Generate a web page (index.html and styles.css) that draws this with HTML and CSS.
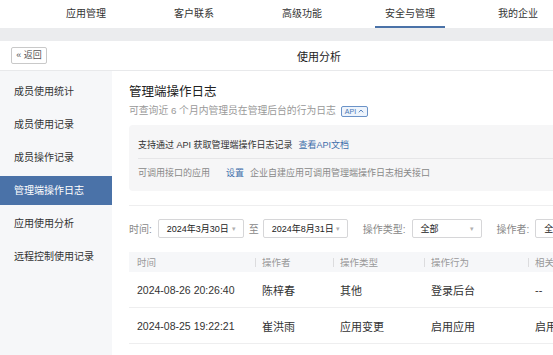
FILE: index.html
```html
<!DOCTYPE html>
<html lang="zh-CN">
<head>
<meta charset="utf-8">
<title>使用分析</title>
<link rel="stylesheet" href="styles.css">
</head>
<body>
<div class="page">
  <nav class="topnav">
    <a class="nav-item"><span>应用管理</span></a>
    <a class="nav-item"><span>客户联系</span></a>
    <a class="nav-item"><span>高级功能</span></a>
    <a class="nav-item active"><span>安全与管理</span></a>
    <a class="nav-item"><span>我的企业</span></a>
  </nav>
  <div class="band"></div>
  <header class="subhead">
    <div class="subhead-left"><button class="back">« 返回</button></div>
    <div class="subhead-title">使用分析</div>
    <div></div>
  </header>
  <div class="content">
    <aside class="sidebar">
      <div class="side-item">成员使用统计</div>
      <div class="side-item">成员使用记录</div>
      <div class="side-item">成员操作记录</div>
      <div class="side-item active">管理端操作日志</div>
      <div class="side-item">应用使用分析</div>
      <div class="side-item">远程控制使用记录</div>
    </aside>
    <main class="main">
      <h1 class="title">管理端操作日志</h1>
      <p class="subtitle">可查询近 6 个月内管理员在管理后台的行为日志<span class="badge">API<svg width="6" height="4" viewBox="0 0 6 4"><polyline points="0.8,3.3 3,1 5.2,3.3" fill="none" stroke="currentColor" stroke-width="0.9"/></svg></span></p>
      <div class="infobox">
        <div class="info-row first">支持通过 API 获取管理端操作日志记录<a class="link">查看API文档</a></div>
        <div class="info-row second"><span class="muted">可调用接口的应用</span><a class="link">设置</a><span class="muted">企业自建应用可调用管理端操作日志相关接口</span></div>
      </div>
      <div class="divider"></div>
      <div class="filters">
        <div class="group">
          <span class="label">时间:</span>
          <div class="select w86"><span class="val">2024年3月30日</span><span class="arrow">▾</span></div>
          <span class="label to">至</span>
          <div class="select w85"><span class="val">2024年8月31日</span><span class="arrow">▾</span></div>
        </div>
        <div class="group">
          <span class="label">操作类型:</span>
          <div class="select w70"><span class="val">全部</span><span class="arrow">▾</span></div>
        </div>
        <div class="group">
          <span class="label">操作者:</span>
          <div class="select w70"><span class="val">全部</span><span class="arrow">▾</span></div>
        </div>
      </div>
      <table class="log">
        <colgroup><col class="c1"><col class="c2"><col class="c3"><col class="c4"><col></colgroup>
        <thead>
          <tr><th class="nosep">时间</th><th>操作者</th><th>操作类型</th><th>操作行为</th><th>相关对象</th></tr>
        </thead>
        <tbody>
          <tr><td class="time">2024-08-26 20:26:40</td><td>陈梓春</td><td>其他</td><td>登录后台</td><td>--</td></tr>
          <tr><td class="time">2024-08-25 19:22:21</td><td>崔洪雨</td><td>应用变更</td><td>启用应用</td><td>启用应用</td></tr>
        </tbody>
      </table>
    </main>
  </div>
</div>
</body>
</html>
```
FILE: styles.css
```css
html, body {
  margin: 0;
  padding: 0;
  overflow: hidden;
  background: #ffffff;
}
body {
  font-family: "Liberation Sans", "Noto Sans CJK SC", sans-serif;
  color: #333;
}
.page {
  width: 638px;
}
.topnav {
  display: flex;
  height: 28px;
  padding-left: 32px;
  background: #fff;
}
.nav-item {
  width: 108px;
  text-align: center;
  font-size: 10px;
  color: #333;
}
.nav-item span {
  display: inline-block;
  height: 26px;
  line-height: 27px;
  padding: 0 10px;
  border-bottom: 2px solid transparent;
}
.nav-item.active span {
  border-bottom-color: #4a72a8;
}
.band {
  height: 13px;
  background: #ebecee;
}
.subhead {
  display: grid;
  grid-template-columns: 1fr auto 1fr;
  align-items: center;
  height: 29px;
  border-bottom: 1px solid #e8e9eb;
  background: #fff;
}
.subhead-left {
  padding-left: 11px;
  display: flex;
}
.back {
  height: 17px;
  width: 36px;
  padding: 0;
  border: 1px solid #c9c9c9;
  border-radius: 2px;
  background: #fff;
  color: #555;
  font-family: inherit;
  font-size: 9px;
  line-height: 15px;
}
.subhead-title {
  font-size: 11px;
  color: #222;
}
.content {
  display: flex;
  min-height: 284px;
}
.sidebar {
  width: 112px;
  flex: none;
  background: #f6f7f9;
  padding-top: 6px;
  display: flex;
  flex-direction: column;
  gap: 4px;
}
.side-item {
  height: 29px;
  line-height: 29px;
  padding-left: 14px;
  font-size: 10px;
  color: #333;
}
.side-item.active {
  background: #4a72a8;
  color: #fff;
}
.main {
  flex: 1;
  padding: 12px 0 0 17px;
  min-width: 0;
}
.title {
  margin: 0;
  font-size: 12.5px;
  line-height: 18px;
  font-weight: normal;
  color: #222;
}
.subtitle {
  margin: 3px 0 0;
  font-size: 9.8px;
  line-height: 14px;
  color: #999;
  display: flex;
  align-items: center;
}
.badge {
  display: inline-flex;
  align-items: center;
  gap: 2px;
  margin-left: 5px;
  height: 9px;
  padding: 0 3px;
  border: 1px solid #6b93c8;
  border-radius: 2px;
  background: #eef4fc;
  color: #4a78b5;
  font-size: 7px;
  line-height: 9px;
}
.infobox {
  margin-top: 7px;
  background: #f6f6f7;
  border-radius: 4px;
  padding: 0 9px;
}
.info-row {
  font-size: 9px;
  line-height: 14px;
}
.info-row.first {
  padding: 13px 0 6px;
  border-bottom: 1px solid #e6e6e8;
  color: #333;
}
.info-row.second {
  padding: 7px 0 11px;
  display: flex;
}
.muted {
  color: #888;
}
.link {
  color: #3f6fab;
  margin-left: 6px;
  margin-right: 6px;
}
.info-row.second .link {
  margin-left: 16px;
}
.divider {
  margin-top: 14px;
  height: 1px;
  background: #eeeeef;
}
.filters {
  margin-top: 13px;
  display: flex;
  align-items: center;
  gap: 15px;
  white-space: nowrap;
}
.group {
  display: flex;
  align-items: center;
  gap: 6px;
}
.label {
  font-size: 10px;
  color: #888;
}
.label.to {
  margin: 0 -2px 0 -1px;
}
.select {
  display: flex;
  align-items: center;
  justify-content: space-between;
  box-sizing: border-box;
  height: 19px;
  padding: 0 7px 0 8px;
  border: 1px solid #d6d6d8;
  border-radius: 2px;
  background: #fff;
  font-size: 9px;
  color: #222;
}
.w86 { width: 86px; }
.w85 { width: 85px; }
.w70 { width: 70px; }
.arrow {
  color: #b0b0b0;
  font-size: 7px;
}
.log {
  margin-top: 14px;
  width: 100%;
  border-collapse: collapse;
  table-layout: fixed;
}
.c1 { width: 126px; }
.c2 { width: 78px; }
.c3 { width: 91px; }
.c4 { width: 104px; }
.log th {
  height: 20px;
  padding: 0 0 0 7px;
  text-align: left;
  font-weight: normal;
  font-size: 9.5px;
  color: #999;
  background: #f6f7f9 linear-gradient(#dcdcde, #dcdcde) no-repeat left center / 1px 9px;
}
.log th.nosep {
  background: #f6f7f9;
  padding-left: 8px;
}
.log td {
  height: 35px;
  padding: 0 0 0 7px;
  border-bottom: 1px solid #eeeeef;
  font-size: 11px;
  color: #333;
  white-space: nowrap;
  overflow: hidden;
}
.log td.time {
  padding-left: 8px;
  font-size: 10.5px;
}
```
